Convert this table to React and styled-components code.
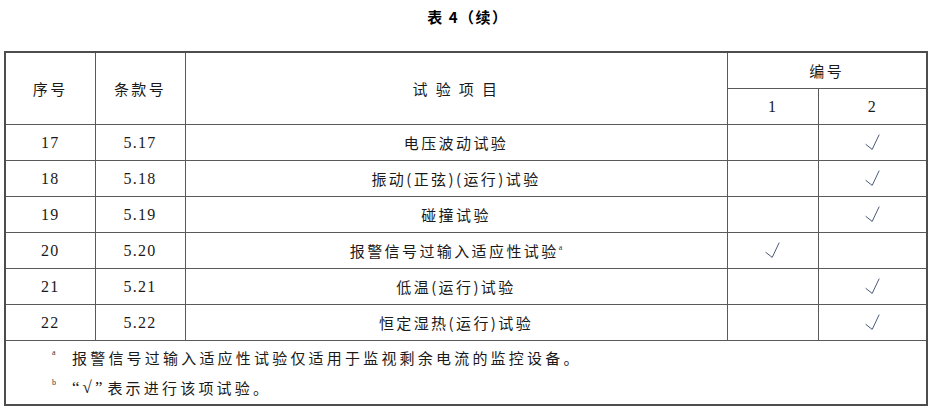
import React from "react";
import styled, { createGlobalStyle } from "styled-components";

const Global = createGlobalStyle`
  html, body { margin: 0; padding: 0; background: #fff; }
  body { font-family: "Noto Sans CJK SC", "Noto Sans", sans-serif; color: #111; }
`;

const Page = styled.div`
  width: 932px;
  height: 410px;
  padding: 0 0 0 4px;
  box-sizing: border-box;
`;

const Title = styled.div`
  height: 51px;
  padding-top: 6px;
  box-sizing: border-box;
  text-align: center;
  font-size: 15px;
  font-weight: 700;
  line-height: 22px;
  letter-spacing: 1.5px;
  color: #000;
`;

const Table = styled.table`
  border-collapse: collapse;
  table-layout: fixed;
  width: 924px;
  border: 2px solid #4d4d4d;
`;

const Cell = styled.td`
  border: 1px solid #5a5a5a;
  height: 35px;
  padding: 0;
  text-align: center;
  vertical-align: middle;
  font-size: ${(p) => (p.$num ? 16 : 15)}px;
  line-height: 20px;
  letter-spacing: ${(p) => (p.$spaced ? "2.4px" : p.$num ? "1.2px" : "0")};
  font-family: ${(p) =>
    p.$num
      ? '"Liberation Serif", "Noto Sans CJK SC", serif'
      : '"Noto Sans CJK SC", sans-serif'};
  color: #1a1a1a;
`;

const CheckIcon = styled.svg`
  display: block;
  margin: 0 auto;
  width: 15px;
  height: 16px;
  position: relative;
  top: -1px;
`;

const Check = () => (
  <CheckIcon viewBox="0 0 15 16">
    <path
      d="M0.6 10.2 L7.2 15.4 L14.2 0.6"
      fill="none"
      stroke="#4a5a78"
      strokeWidth="1"
    />
  </CheckIcon>
);

const Sup = styled.sup`
  font-size: 8px;
  vertical-align: top;
  position: relative;
  top: -3px;
  letter-spacing: 0;
  color: #333;
  font-family: "Liberation Serif", serif;
`;

const NoteCell = styled.td`
  border: 1px solid #5a5a5a;
  height: 61px;
  padding: 2px 0 0 46px;
  text-align: left;
  vertical-align: top;
`;

const NoteLine = styled.div`
  display: flex;
  align-items: flex-start;
  height: 30px;
  line-height: 30px;
  font-size: 15px;
  letter-spacing: 3.2px;
  color: #1a1a1a;
`;

const NoteMark = styled.span`
  width: 20px;
  font-size: 8px;
  line-height: 20px;
  letter-spacing: 0;
  color: #333;
  font-family: "Liberation Serif", serif;
`;

const Quote = styled.span`
  font-family: "Liberation Serif", serif;
  font-size: 17px;
  letter-spacing: 3px;
  margin-right: 2px;
`;

const rows = [
  ["17", "5.17", "电压波动试验", false, true],
  ["18", "5.18", "振动(正弦)(运行)试验", false, true],
  ["19", "5.19", "碰撞试验", false, true],
  ["20", "5.20", "报警信号过输入适应性试验", true, false, true],
  ["21", "5.21", "低温(运行)试验", false, true],
  ["22", "5.22", "恒定湿热(运行)试验", false, true],
];

export default function App() {
  return (
    <Page>
      <Global />
      <Title>表 4（续）</Title>
      <Table>
        <colgroup>
          <col style={{ width: 90 }} />
          <col style={{ width: 90 }} />
          <col style={{ width: 542 }} />
          <col style={{ width: 91 }} />
          <col style={{ width: 109 }} />
        </colgroup>
        <tbody>
          <tr>
            <Cell rowSpan={2} $spaced>序号</Cell>
            <Cell rowSpan={2} $spaced>条款号</Cell>
            <Cell rowSpan={2} $spaced>试 验 项 目</Cell>
            <Cell colSpan={2} $spaced>编号</Cell>
          </tr>
          <tr>
            <Cell $num>1</Cell>
            <Cell $num>2</Cell>
          </tr>
          {rows.map(([n, c, t, a, b, note]) => (
            <tr key={n}>
              <Cell $num>{n}</Cell>
              <Cell $num>{c}</Cell>
              <Cell $spaced>
                {t}
                {note && <Sup>a</Sup>}
              </Cell>
              <Cell>{a && <Check />}</Cell>
              <Cell>{b && <Check />}</Cell>
            </tr>
          ))}
          <tr>
            <NoteCell colSpan={5}>
              <NoteLine>
                <NoteMark>a</NoteMark>
                报警信号过输入适应性试验仅适用于监视剩余电流的监控设备。
              </NoteLine>
              <NoteLine>
                <NoteMark>b</NoteMark>
                <Quote>“√”</Quote>
                表示进行该项试验。
              </NoteLine>
            </NoteCell>
          </tr>
        </tbody>
      </Table>
    </Page>
  );
}
